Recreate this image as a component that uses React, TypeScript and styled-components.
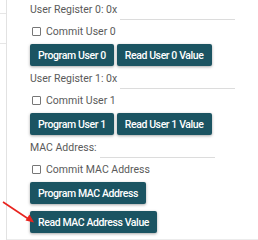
import React from "react";
import styled, { createGlobalStyle } from "styled-components";

const Global = createGlobalStyle`
  html, body { margin: 0; padding: 0; background: #fff; }
  body { font-family: Roboto, "Liberation Sans", sans-serif; }
`;

const Page = styled.div`
  position: relative;
  display: flex;
  width: 258px;
  height: 240px;
  overflow: hidden;
`;

const LeftStrip = styled.div`
  width: 6px;
  flex: none;
  border-right: 1px solid #e2e2e2;
  display: flex;
  flex-direction: column;
`;

const StripDivider = styled.div<{ $top: number }>`
  margin-top: ${(p) => p.$top}px;
  height: 1px;
  background: #e6e6e6;
`;

const Main = styled.div`
  flex: 1;
  padding: 3px 0 0 23px;
  border-bottom: 1px solid #ececec;
  display: flex;
  flex-direction: column;
  align-items: flex-start;
`;

const Group = styled.div`
  display: flex;
  flex-direction: column;
  align-items: flex-start;
  margin-bottom: 6px;
`;

const Field = styled.div`
  display: flex;
  align-items: flex-start;
  height: 17px;
  margin-bottom: 4px;
`;

const Label = styled.span`
  font-size: 10.5px;
  line-height: 14px;
  color: #5a5a5a;
`;

const Underline = styled.div`
  width: 115px;
  height: 16px;
  margin-left: 3px;
  border-bottom: 1px solid #dcdcdc;
`;

const CheckRow = styled.label`
  display: flex;
  align-items: center;
  height: 14px;
  margin-left: 2px;
  margin-bottom: 6px;
  font-size: 10.5px;
  color: #5a5a5a;
`;

const Box = styled.span`
  width: 7px;
  height: 7px;
  border: 1px solid #777;
  border-radius: 1px;
  margin-right: 5px;
`;

const ButtonRow = styled.div<{ $column?: boolean }>`
  display: flex;
  flex-direction: ${(p) => (p.$column ? "column" : "row")};
  align-items: flex-start;
  gap: ${(p) => (p.$column ? "7px" : "3px")};
`;

const Button = styled.button`
  height: 22px;
  padding: 0 8px;
  border: none;
  border-radius: 2px;
  background: #1b5462;
  color: #fff;
  font-family: Roboto, "Liberation Sans", sans-serif;
  font-weight: 500;
  font-size: 10.5px;
  letter-spacing: -0.4px;
  white-space: nowrap;
  box-shadow: 0 1px 3px rgba(0, 0, 0, 0.35);
  cursor: pointer;
`;

const Arrow = styled.svg`
  position: absolute;
  left: 0;
  top: 195px;
`;

export default function App() {
  return (
    <Page>
      <Global />
      <LeftStrip>
        <StripDivider $top={13} />
        <StripDivider $top={29} />
      </LeftStrip>
      <Main>
        <Group>
          <Field>
            <Label>User Register 0: 0x</Label>
            <Underline />
          </Field>
          <CheckRow>
            <Box />
            Commit User 0
          </CheckRow>
          <ButtonRow>
            <Button>Program User 0</Button>
            <Button>Read User 0 Value</Button>
          </ButtonRow>
        </Group>
        <Group>
          <Field>
            <Label>User Register 1: 0x</Label>
            <Underline />
          </Field>
          <CheckRow>
            <Box />
            Commit User 1
          </CheckRow>
          <ButtonRow>
            <Button>Program User 1</Button>
            <Button>Read User 1 Value</Button>
          </ButtonRow>
        </Group>
        <Group>
          <Field>
            <Label>MAC Address:</Label>
            <Underline />
          </Field>
          <CheckRow>
            <Box />
            Commit MAC Address
          </CheckRow>
          <ButtonRow $column>
            <Button>Program MAC Address</Button>
            <Button>Read MAC Address Value</Button>
          </ButtonRow>
        </Group>
      </Main>
      <Arrow width="40" height="32" viewBox="0 0 40 32">
        <line x1="3" y1="7" x2="30" y2="25" stroke="#e8231e" strokeWidth="1.6" />
        <polygon points="34,27.5 25.5,25.5 29.5,19.5" fill="#e8231e" />
      </Arrow>
    </Page>
  );
}
